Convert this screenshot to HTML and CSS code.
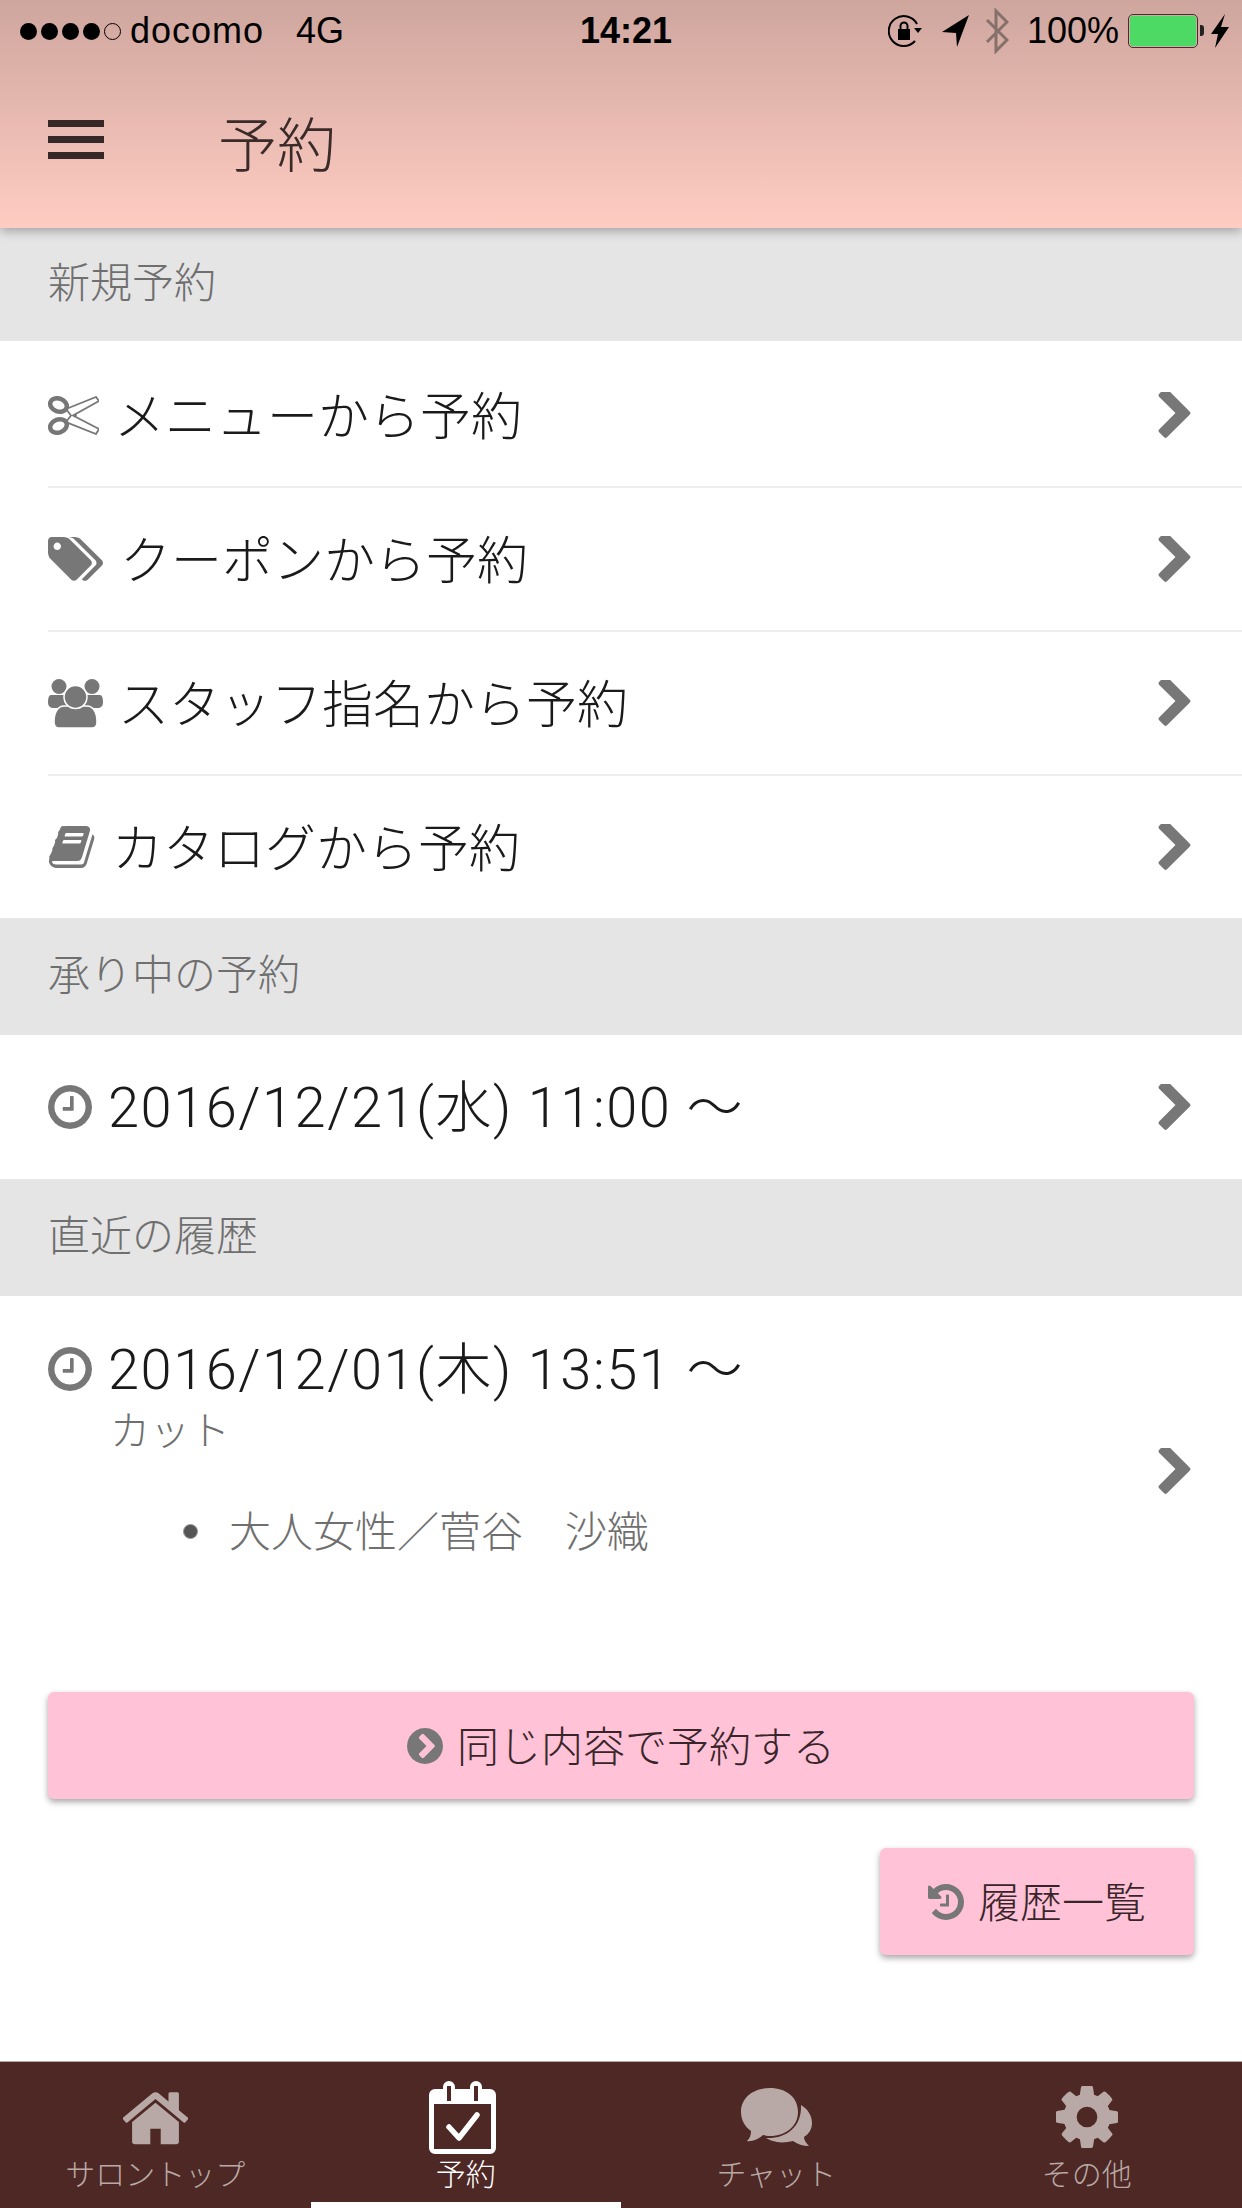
FILE: index.html
```html
<!DOCTYPE html>
<html lang="ja">
<head>
    <meta charset="UTF-8">
    <meta name="viewport" content="width=device-width, initial-scale=1.0">
    <title>予約</title>
    <link rel="stylesheet" href="styles.css">
</head>
<body>
    <!-- icon sprite -->
    <svg class="sprite" xmlns="http://www.w3.org/2000/svg">
        <symbol id="i-chevron" viewBox="340 150 1050 1490"><path d="M1363 877l-742 742q-19 19-45 19t-45-19l-166-166q-19-19-19-45t19-45l531-531-531-531q-19-19-19-45t19-45l166-166q19-19 45-19t45 19l742 742q19 19 19 45t-19 45z"/></symbol>
        <symbol id="i-clock" viewBox="128 128 1536 1536"><path d="M1024 544v448q0 14-9 23t-23 9h-320q-14 0-23-9t-9-23v-64q0-14 9-23t23-9h224v-352q0-14 9-23t23-9h64q14 0 23 9t9 23zm416 352q0-148-73-273t-198-198-273-73-273 73-198 198-73 273 73 273 198 198 273 73 273-73 198-198 73-273zm224 0q0 209-103 385.5t-279.5 279.5-385.5 103-385.5-103-279.5-279.5-103-385.5 103-385.5 279.5-279.5 385.5-103 385.5 103 279.5 279.5 103 385.5z"/></symbol>
        <symbol id="i-tags" viewBox="-64 128 1899 1520"><path d="M384 448q0-53-37.500-90.500t-90.500-37.500-90.500 37.500-37.500 90.500 37.500 90.500 90.500 37.500 90.500-37.500 37.500-90.500zm1067 576q0 53-37 90l-491 492q-39 37-91 37-53 0-90-37l-715-716q-38-37-64.500-101t-26.500-117v-416q0-52 38-90t90-38h416q53 0 117 26.500t102 64.500l715 714q37 39 37 91zm384 0q0 53-37 90l-491 492q-39 37-91 37-36 0-59-14t-53-45l470-470q37-37 37-90 0-52-37-91l-715-714q-38-38-102-64.500t-117-26.500h224q53 0 117 26.500t102 64.500l715 714q37 39 37 91z"/></symbol>
        <symbol id="i-book" viewBox="40 128 1700 1536"><path d="M1703 478q40 57 18 129l-275 906q-19 64-76.500 107.500t-122.500 43.500h-923q-77 0-148.500-53.500t-99.500-131.500q-24-67-2-127 0-4 3-27t4-37q1-8-3-21.500t-3-19.500q2-11 8-21t16.500-23.500 16.500-23.500q23-38 45-91.500t30-91.500q3-10 .5-30t-.5-28q3-11 17-28t17-23q21-36 42-92t25-90q1-9-2.500-32t.5-28q4-13 22-30.500t22-22.500q19-26 42.500-84.500t27.500-96.500q1-8-3-25.500t-2-26.500q2-8 9-18t18-23 17-21q8-12 16.500-30.500t15-35 16-36 19.500-32 26.500-23.500 36-11.500 47.500 5.500l-1 3q38-9 51-9h761q74 0 114 56t18 130l-274 906q-36 119-71.500 153.500t-128.500 34.500h-869q-27 0-38 15-11 16-1 43 24 70 144 70h923q29 0 56-15.500t35-41.500l300-987q7-22 5-57 38 15 59 43zm-1064 2q-4 13 2 22.500t20 9.500h608q13 0 25.500-9.500t16.500-22.500l21-64q4-13-2-22.500t-20-9.500h-608q-13 0-25.500 9.500t-16.500 22.500zm-83 256q-4 13 2 22.500t20 9.500h608q13 0 25.500-9.500t16.500-22.500l21-64q4-13-2-22.500t-20-9.500h-608q-13 0-25.500 9.500t-16.500 22.500z"/></symbol>
        <symbol id="i-history" viewBox="128 128 1536 1536"><path d="M1664 896q0 156-61 298t-164 245-245 164-298 61q-172 0-327-72.500t-264-204.500q-7-10-6.500-22.500t8.500-20.500l137-138q10-9 25-9 16 2 23 12 73 95 179 147t225 52q104 0 198.500-40.500t163.500-109.500 109.500-163.500 40.500-198.500-40.500-198.500-109.500-163.500-163.500-109.500-198.500-40.500q-98 0-188 35.500t-160 101.500l137 138q31 30 14 69-17 40-59 40h-448q-26 0-45-19t-19-45v-448q0-42 40-59 39-17 69 14l130 129q107-101 244.500-156.500t284.500-55.500q156 0 298 61t245 164 164 245 61 298zm-640-288v448q0 14-9 23t-23 9h-320q-14 0-23-9t-9-23v-64q0-14 9-23t23-9h224v-352q0-14 9-23t23-9h64q14 0 23 9t9 23z"/></symbol>
        <symbol id="i-circle-chevron" viewBox="128 128 1536 1536"><path d="M845 1395l454-454q19-19 19-45t-19-45l-454-454q-19-19-45-19t-45 19l-102 102q-19 19-19 45t19 45l307 307-307 307q-19 19-19 45t19 45l102 102q19 19 45 19t45-19zm819-499q0 209-103 385.500t-279.500 279.500-385.500 103-385.500-103-279.500-279.500-103-385.500 103-385.500 279.500-279.500 385.500-103 385.500 103 279.500 279.500 103 385.500z"/></symbol>
        <symbol id="i-home" viewBox="96 190 1600 1350"><path d="M1472 992v480q0 26-19 45t-45 19h-384v-384h-256v384h-384q-26 0-45-19t-19-45v-480q0-1 .5-3t.5-3l575-474 575 474q1 2 1 6zm223-69l-62 74q-8 9-21 11h-3q-13 0-21-7l-692-577-692 577q-12 8-24 7-13-2-21-11l-62-74q-8-10-7-23.500t11-21.500l719-599q32-26 76-26t76 26l244 204v-195q0-14 9-23t23-9h192q14 0 23 9t9 23v408l219 182q10 8 11 21.500t-7 23.500z"/></symbol>
        <symbol id="i-cog" viewBox="128 128 1536 1536"><path d="M1152 896q0-106-75-181t-181-75-181 75-75 181 75 181 181 75 181-75 75-181zm512-109v222q0 12-8 23t-20 13l-185 28q-19 54-39 91 35 50 107 138 10 12 10 25t-9 23q-27 37-99 108t-94 71q-12 0-26-9l-138-108q-44 23-91 38-16 136-29 186-7 28-36 28h-222q-14 0-24.500-8.500t-11.500-21.500l-28-184q-49-16-90-37l-141 107q-10 9-25 9-14 0-25-11-126-114-165-168-7-10-7-23 0-12 8-23 15-21 51-66.500t54-70.500q-27-50-41-99l-183-27q-13-2-21-12.500t-8-23.500v-222q0-12 8-23t19-13l186-28q14-46 39-92-40-57-107-138-10-12-10-24 0-10 9-23 26-36 98.500-107.500t94.500-71.500q13 0 26 10l138 107q44-23 91-38 16-136 29-186 7-28 36-28h222q14 0 24.500 8.500t11.500 21.500l28 184q49 16 90 37l142-107q9-9 24-9 13 0 25 10 129 119 165 170 7 8 7 22 0 12-8 23-15 21-51 66.500t-54 70.500q26 50 41 98l183 28q13 2 21 12.500t8 23.500z"/></symbol>
    </svg>

    <header class="app-header">
        <div class="status-bar">
            <div class="status-left">
                <span class="signal"><i></i><i></i><i></i><i></i><i class="off"></i></span>
                <span class="carrier">docomo</span>
                <span class="network">4G</span>
            </div>
            <div class="status-time">14:21</div>
            <div class="status-right">
                <svg class="st-lock" viewBox="0 0 34 34">
                    <path d="M27 27 A15 15 0 1 1 29 10" fill="none" stroke="#000" stroke-width="2"/>
                    <path d="M26 14 h8 l-4 5z" fill="#000"/>
                    <rect x="10" y="15" width="12" height="11"/>
                    <path d="M12.500 15 v-3 a3.500 3.500 0 0 1 7 0 v3" fill="none" stroke="#000" stroke-width="2"/>
                </svg>
                <svg class="st-arrow" viewBox="0 0 28 32"><path d="M0 17 L27 0 L15 32 L14 18z"/></svg>
                <svg class="st-bt" viewBox="0 0 24 46"><path d="M2 34 L22 14 L11 3 V43 L22 32 L2 12" fill="none" stroke="#85706b" stroke-width="3"/></svg>
                <span class="battery-pct">100%</span>
                <span class="battery"><span class="battery-fill"></span></span>
                <svg class="st-bolt" viewBox="0 0 18 34"><path d="M14 0 L0 20 H7 L4 34 L18 13 H10z"/></svg>
            </div>
        </div>
        <div class="toolbar">
            <span class="hamburger"><i></i><i></i><i></i></span>
            <h1 class="page-title">予約</h1>
        </div>
    </header>

    <main class="content">
        <div class="section-head section-head-first">新規予約</div>
        <ul class="menu-list">
            <li class="menu-row">
                <svg class="row-icon ic-scissors" viewBox="0 0 51 39">
                    <path d="M18 13 L48 1 L51 5 L25 19.500 L51 33 L48 38 L18 26 L23 19.500z" fill="#fff" stroke="#777" stroke-width="1.800"/>
                    <g fill="none" stroke="#777" stroke-width="4.500">
                        <ellipse cx="10.500" cy="9" rx="8.500" ry="6.500" transform="rotate(20 10.500 9)"/>
                        <ellipse cx="10.500" cy="30" rx="8.500" ry="6.500" transform="rotate(-20 10.500 30)"/>
                    </g>
                    <circle cx="27" cy="19.500" r="1.800" fill="#777"/>
                </svg>
                <span class="row-label">メニューから予約</span>
                <svg class="chevron"><use href="#i-chevron"/></svg>
            </li>
            <li class="menu-row">
                <svg class="row-icon ic-tags"><use href="#i-tags"/></svg>
                <span class="row-label">クーポンから予約</span>
                <svg class="chevron"><use href="#i-chevron"/></svg>
            </li>
            <li class="menu-row">
                <svg class="row-icon ic-users" viewBox="0 0 55 49">
                    <circle cx="11" cy="7.500" r="7.500"/>
                    <circle cx="44" cy="7.500" r="7.500"/>
                    <path d="M3 16 H19 V29 H6 C2 29 0 27 0 23 C0 19 1 16 3 16z"/>
                    <path d="M52 16 H36 V29 H49 C53 29 55 27 55 23 C55 19 54 16 52 16z"/>
                    <path d="M16 27 H39 C45 27 49 33 49 43 C49 47 47 49 44 49 H11 C8 49 6 47 6 43 C6 33 10 27 16 27z" stroke="#fff" stroke-width="1.500"/>
                    <circle cx="27.500" cy="18" r="11.500" stroke="#fff" stroke-width="1.500"/>
                </svg>
                <span class="row-label">スタッフ指名から予約</span>
                <svg class="chevron"><use href="#i-chevron"/></svg>
            </li>
            <li class="menu-row">
                <svg class="row-icon ic-book"><use href="#i-book"/></svg>
                <span class="row-label">カタログから予約</span>
                <svg class="chevron"><use href="#i-chevron"/></svg>
            </li>
        </ul>

        <div class="section-head">承り中の予約</div>
        <div class="menu-row">
            <svg class="row-icon ic-clock"><use href="#i-clock"/></svg>
            <span class="row-date">2016/12/21(水) 11:00 〜</span>
            <svg class="chevron"><use href="#i-chevron"/></svg>
        </div>

        <div class="section-head">直近の履歴</div>
        <div class="history-row">
            <div class="history-body">
                <div class="history-date">
                    <svg class="row-icon ic-clock"><use href="#i-clock"/></svg>
                    <span class="row-date">2016/12/01(木) 13:51 〜</span>
                </div>
                <div class="history-sub">カット</div>
                <ul class="history-items">
                    <li>大人女性／菅谷　沙織</li>
                </ul>
            </div>
            <svg class="chevron"><use href="#i-chevron"/></svg>
        </div>

        <div class="actions">
            <button class="btn btn-wide" type="button">
                <svg class="btn-icon"><use href="#i-circle-chevron"/></svg>同じ内容で予約する
            </button>
            <button class="btn btn-small" type="button">
                <svg class="btn-icon"><use href="#i-history"/></svg>履歴一覧
            </button>
        </div>
    </main>

    <nav class="tab-bar">
        <div class="tab">
            <span class="tab-icon"><svg class="ti-home"><use href="#i-home"/></svg></span>
            <span class="tab-label">サロントップ</span>
        </div>
        <div class="tab tab-active">
            <span class="tab-icon">
                <svg class="ti-cal" viewBox="0 0 67 74">
                    <path d="M6 9 H14 V7 a6 6 0 0 1 12 0 V9 H41 V7 a6 6 0 0 1 12 0 V9 H61 a6 6 0 0 1 6 6 V68 a6 6 0 0 1 -6 6 H6 a6 6 0 0 1 -6 -6 V15 a6 6 0 0 1 6 -6z M5 24 V69 H62 V24z M18 6 V21 H22 V6z M45 6 V21 H49 V6z" fill="#fff" fill-rule="evenodd"/>
                    <path d="M20 47 L30 58 L48 35" fill="none" stroke="#fff" stroke-width="5.500" stroke-linecap="round" stroke-linejoin="round"/>
                </svg>
            </span>
            <span class="tab-label">予約</span>
        </div>
        <div class="tab">
            <span class="tab-icon">
                <svg class="ti-chat" viewBox="0 0 71 58">
                    <path d="M29 0 C45 0 57 9 57 24 C57 38 45 48 29 48 C26 48 24 47.500 22 47 C18 51 10 54 6 53 C9 50 10 47 10 43 C4 39 0 32 0 24 C0 9 13 0 29 0z"/>
                    <path d="M60 17 C67 21 71 28 71 35 C71 41 68 46 63 49 C63 52 65 55 68 58 C62 58 56 56 52 53 C47 54 42 55 36 54 C32 53 28 52 25 50 C44 51 61 40 60 17z"/>
                </svg>
            </span>
            <span class="tab-label">チャット</span>
        </div>
        <div class="tab">
            <span class="tab-icon"><svg class="ti-cog"><use href="#i-cog"/></svg></span>
            <span class="tab-label">その他</span>
        </div>
    </nav>
</body>
</html>
```

FILE: styles.css
```css
* {
    box-sizing: border-box;
}

html, body {
    margin: 0;
    padding: 0;
}

body {
    width: 1242px;
    height: 2208px;
    display: flex;
    flex-direction: column;
    overflow: hidden;
    background: #fff;
    font-family: 'Noto Sans CJK JP', sans-serif;
    font-weight: 300;
    color: #1a1a1a;
}

ul {
    list-style: none;
    margin: 0;
    padding: 0;
}

.sprite {
    display: none;
}

/* header */
.app-header {
    position: relative;
    z-index: 2;
    height: 228px;
    flex: none;
    background: linear-gradient(to bottom, #cea69e, #ffccc2);
    box-shadow: 0 3px 10px rgba(0, 0, 0, 0.3);
}

.status-bar {
    height: 62px;
    padding: 0 13px 0 20px;
    display: grid;
    grid-template-columns: 1fr auto 1fr;
    align-items: center;
    font-family: 'Liberation Sans', sans-serif;
    font-size: 36px;
    font-weight: 400;
    color: #000;
}

.status-left {
    display: flex;
    align-items: center;
}

.signal {
    display: flex;
    gap: 4px;
    margin-right: 9px;
}

.signal i {
    width: 17px;
    height: 17px;
    border-radius: 50%;
    background: #000;
}

.signal i.off {
    background: none;
    border: 1.5px solid #000;
}

.carrier {
    letter-spacing: 1px;
}

.network {
    margin-left: 32px;
}

.status-time {
    font-weight: 700;
    padding-left: 3px;
}

.status-right {
    display: flex;
    align-items: center;
    justify-content: flex-end;
}

.st-lock {
    width: 34px;
    height: 34px;
    margin-right: 20px;
}

.st-arrow {
    width: 28px;
    height: 32px;
    margin-right: 15px;
}

.st-bt {
    width: 24px;
    height: 46px;
    margin-right: 18px;
}

.battery {
    width: 70px;
    height: 34px;
    margin-left: 9px;
    margin-right: 13px;
    padding: 1px;
    border: 1.5px solid #3a3330;
    border-radius: 5px;
    position: relative;
}

.battery::after {
    content: "";
    position: absolute;
    right: -7px;
    top: 10px;
    width: 4px;
    height: 11px;
    background: #222;
    border-radius: 0 3px 3px 0;
}

.battery-fill {
    display: block;
    height: 100%;
    background: #4cd964;
    border-radius: 3px;
}

.st-bolt {
    width: 18px;
    height: 34px;
}

.toolbar {
    height: 166px;
    padding: 0 0 8px 48px;
    display: flex;
    align-items: center;
}

.hamburger {
    width: 56px;
    display: flex;
    flex-direction: column;
    gap: 9px;
    margin-top: -3px;
    margin-right: 114px;
}

.hamburger i {
    height: 7px;
    background: #352826;
}

.page-title {
    margin: 0;
    font-size: 59px;
    font-weight: 300;
    color: #3a2a28;
}

/* list */
.content {
    flex: 1;
}

.section-head {
    height: 117px;
    padding: 0 0 10px 48px;
    display: flex;
    align-items: center;
    background: #e5e5e5;
    color: #6f6f6f;
    font-size: 42px;
}

.section-head-first {
    height: 113px;
}

.menu-list {
    padding-top: 3px;
}

.menu-row {
    height: 144px;
    margin-left: 48px;
    padding-right: 51px;
    display: flex;
    align-items: center;
    border-bottom: 2px solid #eee;
}

.menu-row:last-child {
    height: 142px;
    border-bottom: none;
}

.content > .menu-row {
    height: 144px;
    border-bottom: none;
}

.row-icon {
    flex: none;
    fill: #777;
    margin-right: 15px;
}

.ic-scissors {
    width: 51px;
    height: 39px;
}

.ic-tags {
    width: 55px;
    height: 44px;
    margin-right: 17px;
}

.ic-users {
    width: 55px;
    height: 49px;
}

.ic-book {
    width: 47px;
    height: 42px;
    margin-right: 17px;
}

.ic-clock {
    width: 44px;
    height: 44px;
    margin-right: 16px;
}

.row-label {
    flex: 1;
    padding-bottom: 5px;
    font-size: 51px;
}

.row-date {
    flex: 1;
    padding-top: 2px;
    font-family: Roboto, 'Noto Sans CJK JP', sans-serif;
    font-size: 56px;
    letter-spacing: 1.5px;
    line-height: 60px;
}

.chevron {
    flex: none;
    width: 33px;
    height: 46px;
    fill: #777;
}

/* history */
.history-row {
    height: 348px;
    padding: 42px 51px 0 48px;
    display: flex;
    align-items: center;
}

.history-body {
    flex: 1;
    align-self: flex-start;
}

.history-date {
    display: flex;
    align-items: center;
}

.history-sub {
    margin-left: 62px;
    font-size: 40px;
    line-height: 56px;
    color: #6f6f6f;
}

.history-items {
    margin-top: 43px;
    padding-left: 135px;
    font-size: 42px;
    line-height: 60px;
    color: #6f6f6f;
}

.history-items li {
    display: flex;
    align-items: center;
    gap: 31px;
}

.history-items li::before {
    content: "";
    width: 13px;
    height: 13px;
    margin-top: 5px;
    border-radius: 50%;
    background: #555;
    border: 1px solid #999;
}

.history-row .chevron {
    margin-top: -40px;
}

/* buttons */
.actions {
    padding: 48px 48px 0;
    display: flex;
    flex-direction: column;
    align-items: flex-end;
    gap: 49px;
}

.btn {
    height: 107px;
    padding: 0 0 5px;
    border: none;
    border-radius: 6px;
    background: #ffc2d7;
    box-shadow: 0 3px 6px rgba(0, 0, 0, 0.35);
    display: flex;
    align-items: center;
    justify-content: center;
    font-family: inherit;
    font-weight: 300;
    font-size: 42px;
    color: #38252a;
}

.btn-wide {
    width: 100%;
}

.btn-small {
    width: 314px;
}

.btn-icon {
    width: 36px;
    height: 36px;
    margin-top: 5px;
    margin-right: 14px;
    fill: #777;
}

/* tab bar */
.tab-bar {
    flex: none;
    height: 147px;
    display: grid;
    grid-template-columns: repeat(4, 1fr);
    background: #4e2825;
    border-top: 1px solid #b8a9a6;
}

.tab {
    padding-top: 18px;
    display: flex;
    flex-direction: column;
    align-items: center;
    border-bottom: 6px solid transparent;
    color: #b8a9a6;
    fill: #b8a9a6;
}

.tab-active {
    border-bottom-color: #fff;
    color: #fff;
}

.tab-icon {
    height: 74px;
    display: flex;
    align-items: center;
}

.ti-home {
    width: 65px;
    height: 56px;
}

.ti-cal {
    width: 67px;
    height: 74px;
    margin-right: 6px;
}

.ti-chat {
    width: 71px;
    height: 58px;
}

.ti-cog {
    width: 62px;
    height: 62px;
}

.tab-label {
    font-size: 30px;
    line-height: 36px;
}
```
